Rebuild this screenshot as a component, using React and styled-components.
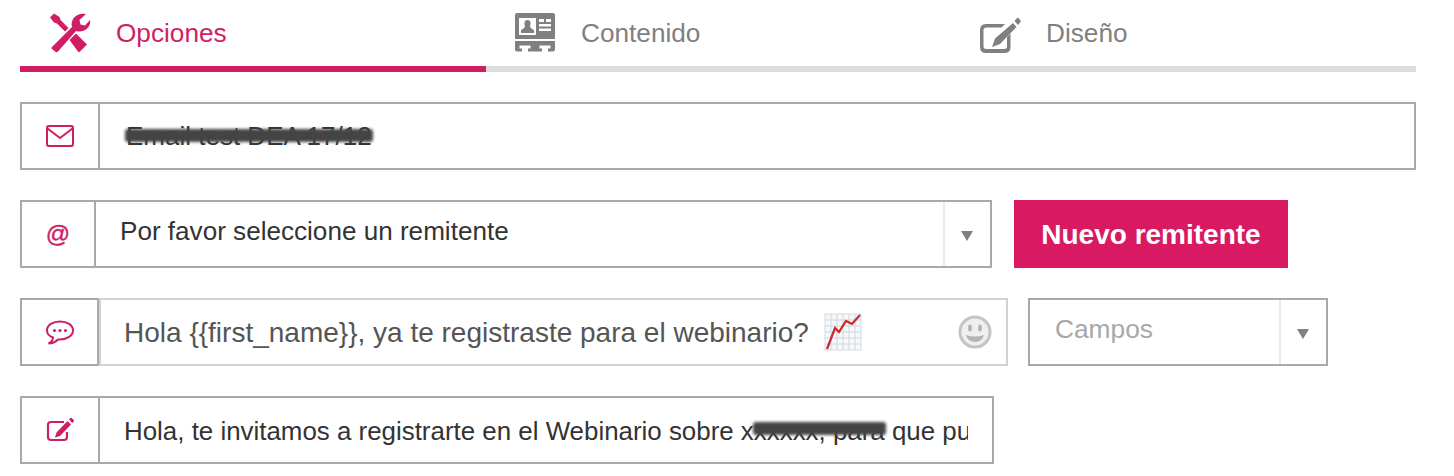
import React from 'react';
import styled, { createGlobalStyle } from 'styled-components';

const PINK = '#cf1e64';

const Global = createGlobalStyle`
    html, body {
        margin: 0;
        padding: 0;
        background: #fff;
    }
    body {
        font-family: "Liberation Sans", Arial, sans-serif;
    }
`

const Page = styled.div`
    width: 1396px;
    padding-left: 20px;
    display: flex;
    flex-direction: column;
    gap: 30px;
`

const Tabs = styled.div`
    display: flex;
    height: 72px;
`

const Tab = styled.div`
    flex: 1;
    display: flex;
    align-items: center;
    gap: ${props => props.$gap}px;
    height: 66px;
    padding-left: ${props => props.$left}px;
    border-bottom: 6px solid ${props => props.$active ? PINK : '#dcdcdc'};
    color: ${props => props.$active ? PINK : '#808080'};
    font-size: 26.2px;
`

const TabIcon = styled.svg`
    width: 42px;
    height: 42px;
    flex: none;
    margin-top: -1px;
    fill: currentColor;
`

const Row = styled.div`
    display: flex;
    gap: 20px;
`

const Field = styled.div`
    width: ${props => props.$width}px;
    height: 68px;
    box-sizing: border-box;
    display: flex;
    border: 2px solid #a9a9a9;
`

const IconCell = styled.div`
    width: ${props => props.$width}px;
    flex: none;
    box-sizing: border-box;
    display: flex;
    align-items: center;
    justify-content: center;
    border-right: 2px solid #a9a9a9;
    color: ${PINK};
`

const SmallIcon = styled.svg`
    width: 30px;
    height: 30px;
    display: block;
    fill: none;
    stroke: currentColor;
    stroke-width: 2;
`

const AtSign = styled.span`
    font-size: 24px;
    line-height: 1;
    -webkit-text-stroke: 0.4px ${PINK};
`

const Value = styled.div`
    flex: 1;
    min-width: 0;
    display: flex;
    align-items: center;
    white-space: nowrap;
    overflow: hidden;
    padding: ${props => props.$pad};
    color: #333;
    font-size: ${props => props.$size}px;
`

const Clip = styled.div`
    width: 100%;
    overflow: hidden;
    line-height: 34px;
`

const Smudged = styled.span`
    position: relative;
    display: inline-block;
    &::after {
        content: "";
        position: absolute;
        left: -1px;
        right: -1px;
        top: 8px;
        height: 13px;
        background: #444;
        filter: blur(1.5px);
        border-radius: 3px;
    }
`

const Arrow = styled.div`
    width: 47px;
    flex: none;
    box-sizing: border-box;
    display: flex;
    align-items: center;
    justify-content: center;
    padding-right: 2px;
    border-left: 2px solid #eaeaea;
    &::before {
        content: "";
        margin-top: 4px;
        border-left: 6px solid transparent;
        border-right: 6px solid transparent;
        border-top: 10px solid #808080;
    }
`

const Button = styled.button`
    width: 274px;
    height: 68px;
    margin-left: 2px;
    border: 0;
    padding: 2px 0 0;
    background: #d91a62;
    color: #fff;
    font-family: inherit;
    font-weight: 700;
    font-size: 28px;
`

const MessageInput = styled.div`
    flex: 1;
    min-width: 0;
    margin: -2px -2px -2px 0;
    border: 2px solid #d2d2d2;
    display: flex;
    align-items: center;
    padding: 2px 0 0 23px;
    color: #555;
    font-size: 28px;
    white-space: nowrap;
`

const Emoji = styled.svg`
    width: 38px;
    height: 38px;
    margin: -2px 0 0 15px;
    flex: none;
`

const Smiley = styled.svg`
    width: 34px;
    height: 34px;
    margin: -2px 14px 0 auto;
    flex: none;
`

const Placeholder = styled(Value)`
    color: #a8a8a8;
    padding: 0 0 6px 25px;
`

function ToolsIcon() {
    return (
        <TabIcon viewBox="0 0 42 42">
            <path d="M1 5.500 L5 1.500 L10.500 5 L11.500 8 L19.500 16 L16 19.500 L8 11.500 L5 10.500 Z"/>
            <path d="M27 21.500 L38 32.500 L31 39.500 Q30 40.500 29 39.500 L20.500 28 Z"/>
            <path d="M3 35 L23 15 C21 8 27 0 37 2 L30.500 8 L31.500 12.500 L36 13.500 L41 8 C42.500 15 35 21.500 27 19 L9 39.500 Q7.500 41 6 39.500 L3 37 Q2 36 3 35 Z"/>
        </TabIcon>
    );
}

function CardIcon() {
    return (
        <TabIcon viewBox="0 0 42 42">
            <path fillRule="evenodd" d="M3 1 H39 Q41 1 41 3 V27 H1 V3 Q1 1 3 1 Z M5 6 V23 H22 V6 Z M25 7 V10 H30 V7 Z M32 7 V10 H37 V7 Z M25 12 V14.500 H37 V12 Z M25 16.500 V19 H37 V16.500 Z"/>
            <path d="M13.500 8 C10.500 8 10 11 10.800 13.500 C11.400 15 10 16.500 7 18 V21 H20 V18 C17 16.500 15.600 15 16.200 13.500 C17 11 16.500 8 13.500 8 Z"/>
            <path fillRule="evenodd" d="M1 29 H41 V37 Q41 39.500 39 39.500 H34 V36.500 H36.500 V33.500 H25.500 V36.500 H28 V39.500 H14 V36.500 H16.500 V33.500 H5.500 V36.500 H8 V39.500 H3 Q1 39.500 1 37 Z"/>
        </TabIcon>
    );
}

function PencilIcon() {
    return (
        <TabIcon viewBox="0 0 42 42">
            <path d="M7 12 H26 L22.500 15.500 H7.500 Q4.500 15.500 4.500 18 V34.500 Q4.500 37 7.500 37 H25 Q28 37 28 34.500 V25 L31.500 21.500 V35 Q31.500 41 25.500 41 H7 Q1 41 1 35 V18 Q1 12 7 12 Z"/>
            <path d="M34 11 L37.500 15 L21 32 L13 35 L16 26.500 Z M35.500 9 L38 6 Q39 5.500 39.500 6 L41.500 8.500 Q42 9.500 41.500 10 L39 13 Z"/>
        </TabIcon>
    );
}

function MailIcon() {
    return (
        <SmallIcon viewBox="0 0 30 30">
            <rect x="2" y="5" width="26" height="20" rx="2"/>
            <path d="M2.500 7.500 L15 17 L27.500 7.500"/>
        </SmallIcon>
    );
}

function BubbleIcon() {
    return (
        <SmallIcon viewBox="0 0 30 30">
            <path d="M15 4.500 C8 4.500 2 8 2 13.500 C2 17 5 19.500 8 20.500 C7.800 23 6.500 25 3.500 26.500 C8 26.500 11 24.500 13 22.500 C14 22.500 14.500 22.500 15 22.500 C22 22.500 28 18.500 28 13.500 C28 8 22 4.500 15 4.500 Z"/>
            <circle cx="9.500" cy="13.500" r="1.600" fill="currentColor" stroke="none"/>
            <circle cx="15" cy="13.500" r="1.600" fill="currentColor" stroke="none"/>
            <circle cx="20.500" cy="13.500" r="1.600" fill="currentColor" stroke="none"/>
        </SmallIcon>
    );
}

function EditIcon() {
    return (
        <SmallIcon viewBox="0 0 30 30">
            <path d="M19 7 H6 Q3 7 3 10 V22 Q3 25 6 25 H19 Q22 25 22 22 V17" strokeWidth="2.200"/>
            <path d="M22.500 6 L26 9.500 L15 21 L10 22.500 L11.500 17.500 Z M24 4.500 L25.500 3 Q26 2.500 26.800 3 L28.800 5 Q29.300 5.800 28.800 6.500 L27.300 8 Z" fill="currentColor" stroke="none"/>
        </SmallIcon>
    );
}

function ChartEmoji() {
    const lines = [7, 13, 19, 25, 31];
    return (
        <Emoji viewBox="0 0 38 38">
            <rect x="1" y="1" width="36" height="36" fill="#f6f8fa" stroke="#d5dce2"/>
            {lines.map(n => (
                <g key={n} stroke="#cfd7de" strokeWidth="1">
                    <path d={`M${n} 1 V37`}/>
                    <path d={`M1 ${n} H37`}/>
                </g>
            ))}
            <path d="M3 36 L11 15 L15 19 L22 8 L28 11 L36 2" fill="none" stroke="#c9282d" strokeWidth="2.200"/>
        </Emoji>
    );
}

function SmileyIcon() {
    return (
        <Smiley viewBox="0 0 34 34">
            <circle cx="17" cy="17" r="15" fill="#efefef" stroke="#c4c4c4" strokeWidth="3"/>
            <ellipse cx="12" cy="13" rx="2" ry="3.500" fill="#b4b4b4"/>
            <ellipse cx="22" cy="13" rx="2" ry="3.500" fill="#b4b4b4"/>
            <path d="M8 20 Q17 23 26 20 Q24 27 17 27 Q10 27 8 20 Z" fill="#b4b4b4"/>
        </Smiley>
    );
}

function App() {
    return (
        <Page>
            <Global/>
            <Tabs>
                <Tab $active $left={29} $gap={25}><ToolsIcon/>Opciones</Tab>
                <Tab $left={28} $gap={25}><CardIcon/>Contenido</Tab>
                <Tab $left={28} $gap={25}><PencilIcon/>Diseño</Tab>
            </Tabs>

            <Field $width={1396}>
                <IconCell $width={78}><MailIcon/></IconCell>
                <Value $pad="0 0 0 26px" $size={26}><Smudged>Email test DEA 17/12</Smudged></Value>
            </Field>

            <Row>
                <Field $width={972}>
                    <IconCell $width={74}><AtSign>@</AtSign></IconCell>
                    <Value $pad="0 0 5px 24px" $size={26.1}>Por favor seleccione un remitente</Value>
                    <Arrow/>
                </Field>
                <Button>Nuevo remitente</Button>
            </Row>

            <Row>
                <Field $width={988}>
                    <IconCell $width={77}><BubbleIcon/></IconCell>
                    <MessageInput>
                        Hola {'{{first_name}}'}, ya te registraste para el webinario?
                        <ChartEmoji/>
                        <SmileyIcon/>
                    </MessageInput>
                </Field>
                <Field $width={300}>
                    <Placeholder $size={26.3}>Campos</Placeholder>
                    <Arrow/>
                </Field>
            </Row>

            <Field $width={974}>
                <IconCell $width={78}><EditIcon/></IconCell>
                <Value $pad="2px 24px 0 24px" $size={25.9}>
                    <Clip>Hola, te invitamos a registrarte en el Webinario sobre x<Smudged>xxxxx, para</Smudged> que pueda conocer más</Clip>
                </Value>
            </Field>
        </Page>
    );
}

export default App;
